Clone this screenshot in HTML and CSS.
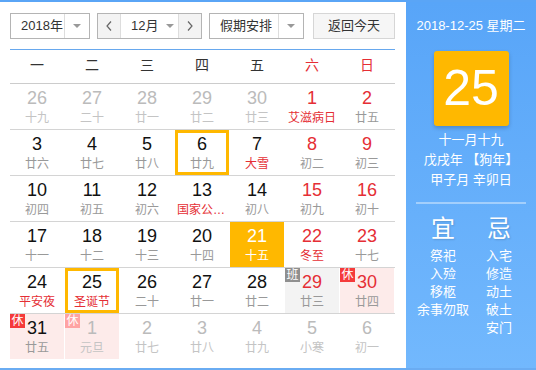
FILE: index.html
```html
<!DOCTYPE html>
<html lang="zh-CN">
<head>
<meta charset="UTF-8">
<meta name="viewport" content="width=device-width, initial-scale=1.0">
<title>万年历</title>
<link rel="stylesheet" href="styles.css">
</head>
<body>
<div class="cal">
    <div class="main">
        <div class="toolbar">
            <div class="sel year">
                <span class="txt">2018年</span>
                <span class="arr"><i class="tri"></i></span>
            </div>
            <div class="sel month">
                <span class="nav prev"><svg width="6" height="10" viewBox="0 0 6 10"><polyline points="5,0.5 1,5 5,9.5" fill="none" stroke="#666" stroke-width="1.2"/></svg></span>
                <span class="mid">12月<i class="tri"></i></span>
                <span class="nav next"><svg width="6" height="10" viewBox="0 0 6 10"><polyline points="1,0.5 5,5 1,9.5" fill="none" stroke="#666" stroke-width="1.2"/></svg></span>
            </div>
            <div class="sel holiday">
                <span class="txt">假期安排</span>
                <span class="arr"><i class="tri"></i></span>
            </div>
            <div class="btn">返回今天</div>
        </div>
        <div class="bar-line"></div>
        <div class="week">
            <span>一</span><span>二</span><span>三</span><span>四</span><span>五</span><span class="red">六</span><span class="red">日</span>
        </div>
        <div class="days">
            <div class="row">
                <div class="day other"><div class="num">26</div><div class="lunar">十九</div></div>
                <div class="day other"><div class="num">27</div><div class="lunar">二十</div></div>
                <div class="day other"><div class="num">28</div><div class="lunar">廿一</div></div>
                <div class="day other"><div class="num">29</div><div class="lunar">廿二</div></div>
                <div class="day other"><div class="num">30</div><div class="lunar">廿三</div></div>
                <div class="day wkend fest"><div class="num">1</div><div class="lunar">艾滋病日</div></div>
                <div class="day wkend"><div class="num">2</div><div class="lunar">廿五</div></div>
            </div>
            <div class="row">
                <div class="day"><div class="num">3</div><div class="lunar">廿六</div></div>
                <div class="day"><div class="num">4</div><div class="lunar">廿七</div></div>
                <div class="day"><div class="num">5</div><div class="lunar">廿八</div></div>
                <div class="day mark"><div class="num">6</div><div class="lunar">廿九</div></div>
                <div class="day fest"><div class="num">7</div><div class="lunar">大雪</div></div>
                <div class="day wkend"><div class="num">8</div><div class="lunar">初二</div></div>
                <div class="day wkend"><div class="num">9</div><div class="lunar">初三</div></div>
            </div>
            <div class="row">
                <div class="day"><div class="num">10</div><div class="lunar">初四</div></div>
                <div class="day"><div class="num">11</div><div class="lunar">初五</div></div>
                <div class="day"><div class="num">12</div><div class="lunar">初六</div></div>
                <div class="day fest"><div class="num">13</div><div class="lunar">国家公祭日</div></div>
                <div class="day"><div class="num">14</div><div class="lunar">初八</div></div>
                <div class="day wkend"><div class="num">15</div><div class="lunar">初九</div></div>
                <div class="day wkend"><div class="num">16</div><div class="lunar">初十</div></div>
            </div>
            <div class="row">
                <div class="day"><div class="num">17</div><div class="lunar">十一</div></div>
                <div class="day"><div class="num">18</div><div class="lunar">十二</div></div>
                <div class="day"><div class="num">19</div><div class="lunar">十三</div></div>
                <div class="day"><div class="num">20</div><div class="lunar">十四</div></div>
                <div class="day active"><div class="num">21</div><div class="lunar">十五</div></div>
                <div class="day wkend fest"><div class="num">22</div><div class="lunar">冬至</div></div>
                <div class="day wkend"><div class="num">23</div><div class="lunar">十七</div></div>
            </div>
            <div class="row">
                <div class="day fest"><div class="num">24</div><div class="lunar">平安夜</div></div>
                <div class="day mark fest"><div class="num">25</div><div class="lunar">圣诞节</div></div>
                <div class="day"><div class="num">26</div><div class="lunar">二十</div></div>
                <div class="day"><div class="num">27</div><div class="lunar">廿一</div></div>
                <div class="day"><div class="num">28</div><div class="lunar">廿二</div></div>
                <div class="day wkend work"><span class="tag">班</span><div class="num">29</div><div class="lunar">廿三</div></div>
                <div class="day wkend rest"><span class="tag">休</span><div class="num">30</div><div class="lunar">廿四</div></div>
            </div>
            <div class="row">
                <div class="day rest"><span class="tag">休</span><div class="num">31</div><div class="lunar">廿五</div></div>
                <div class="day other rest"><span class="tag">休</span><div class="num">1</div><div class="lunar">元旦</div></div>
                <div class="day other"><div class="num">2</div><div class="lunar">廿七</div></div>
                <div class="day other"><div class="num">3</div><div class="lunar">廿八</div></div>
                <div class="day other"><div class="num">4</div><div class="lunar">廿九</div></div>
                <div class="day other"><div class="num">5</div><div class="lunar">小寒</div></div>
                <div class="day other"><div class="num">6</div><div class="lunar">初一</div></div>
            </div>
        </div>
    </div>
    <div class="side">
        <div class="side-date">2018-12-25 星期二</div>
        <div class="big">25</div>
        <div class="ln first">十一月十九</div>
        <div class="ln">戊戌年 【狗年】</div>
        <div class="ln">甲子月 辛卯日</div>
        <div class="sep"></div>
        <div class="yiji">
            <div class="col">
                <div class="yj">宜</div>
                <div>祭祀</div>
                <div>入殓</div>
                <div>移柩</div>
                <div>余事勿取</div>
            </div>
            <div class="col">
                <div class="yj">忌</div>
                <div>入宅</div>
                <div>修造</div>
                <div>动土</div>
                <div>破土</div>
                <div>安门</div>
            </div>
        </div>
    </div>
</div>
</body>
</html>
```

FILE: styles.css
```css
body {
    margin: 0;
    font-family: "Liberation Sans", "Noto Sans CJK SC", sans-serif;
    background: #fff;
}
.cal {
    display: flex;
    width: 536px;
    height: 366px;
    border-top: 2px solid #5aa5f6;
    border-bottom: 2px solid #6aacf2;
}
.main {
    width: 385px;
    padding: 11px 11px 0 10px;
    background: #fff;
}

/* toolbar */
.toolbar {
    display: flex;
    height: 26px;
    font-size: 13px;
    color: #333;
}
.sel {
    display: flex;
    box-sizing: border-box;
    height: 26px;
    border: 1px solid #b4b4b4;
    background: #fff;
    line-height: 24px;
}
.sel .txt {
    flex: 1;
    padding-left: 10px;
}
.sel .arr {
    width: 24px;
    border-left: 1px solid #ddd;
    display: flex;
    align-items: center;
    justify-content: center;
}
.tri {
    display: inline-block;
    width: 0;
    height: 0;
    border-left: 4px solid transparent;
    border-right: 4px solid transparent;
    border-top: 4px solid #999;
}
.year {
    width: 80px;
}
.month {
    width: 105px;
    margin-left: 7px;
}
.month .nav {
    width: 22px;
    background: #f3f3f3;
    display: flex;
    align-items: center;
    justify-content: center;
}
.month .prev {
    border-right: 1px solid #ddd;
}
.month .next {
    border-left: 1px solid #ddd;
}
.month .mid {
    flex: 1;
    display: flex;
    align-items: center;
    padding-left: 10px;
    gap: 8px;
}
.holiday {
    width: 95px;
    margin-left: 7px;
}
.btn {
    box-sizing: border-box;
    width: 82px;
    height: 26px;
    margin-left: 9px;
    border: 1px solid #d6d6d6;
    background: #f6f6f6;
    text-align: center;
    line-height: 24px;
}
.bar-line {
    margin-top: 10px;
    border-top: 1px solid #67a8ee;
}

/* week header */
.week {
    display: grid;
    grid-template-columns: repeat(7, 54px);
    column-gap: 1px;
    height: 33px;
    line-height: 30px;
    border-bottom: 1px solid #ccc;
    font-size: 14px;
    color: #333;
    text-align: center;
}
.week .red {
    color: #e52e35;
}

/* days */
.row {
    display: grid;
    grid-template-columns: repeat(7, 54px);
    column-gap: 1px;
    height: 45px;
    border-bottom: 1px solid #d4d4d4;
}
.row:last-child {
    border-bottom: 0;
}
.day {
    position: relative;
    box-sizing: border-box;
    padding-top: 4px;
    text-align: center;
    color: #111;
}
.num {
    font-size: 18px;
    line-height: 20px;
}
.lunar {
    margin-top: 2px;
    padding: 0 2px;
    font-size: 12px;
    line-height: 16px;
    color: #999;
    white-space: nowrap;
    overflow: hidden;
    text-overflow: ellipsis;
}
.wkend .num {
    color: #e52e35;
}
.fest .lunar {
    color: #e52e35;
}
.other .num {
    color: #bbb;
}
.other .lunar {
    color: #c4c4c4;
}
.mark {
    box-shadow: inset 0 0 0 3px #ffb800;
}
.active {
    background: #ffb800;
}
.active .num,
.active .lunar {
    color: #fff;
}
.work {
    background: #f3f3f3;
}
.rest {
    background: #fdebea;
}
.tag {
    position: absolute;
    left: 0;
    top: 0;
    width: 15px;
    height: 14px;
    font-size: 12px;
    line-height: 14px;
    color: #fff;
    background: #f53a3a;
}
.work .tag {
    background: #8f8f8f;
}
.other .tag {
    background: #ffa3a3;
}

/* side panel */
.side {
    flex: 1;
    padding-top: 15px;
    background: linear-gradient(#58a5f8, #72b8fd);
    color: #fff;
    text-align: center;
}
.side-date {
    font-size: 13px;
    line-height: 18px;
}
.big {
    width: 75px;
    height: 75px;
    margin: 16px auto 0;
    border-radius: 3px;
    background: #ffb800;
    box-shadow: 0 2px 4px rgba(0, 0, 0, 0.2);
    font-size: 50px;
    line-height: 75px;
}
.ln {
    font-size: 13px;
    line-height: 20px;
}
.ln.first {
    margin-top: 4px;
}
.sep {
    height: 2px;
    margin: 12px 10px 0;
    background: rgba(255, 255, 255, 0.4);
}
.yiji {
    display: flex;
    justify-content: center;
    margin-top: 11px;
}
.col {
    width: 56px;
    font-size: 13px;
    line-height: 18px;
}
.col .yj {
    font-size: 24px;
    line-height: 28px;
    margin-bottom: 4px;
    text-shadow: 1px 1px 2px rgba(0, 0, 0, 0.15);
}
```
